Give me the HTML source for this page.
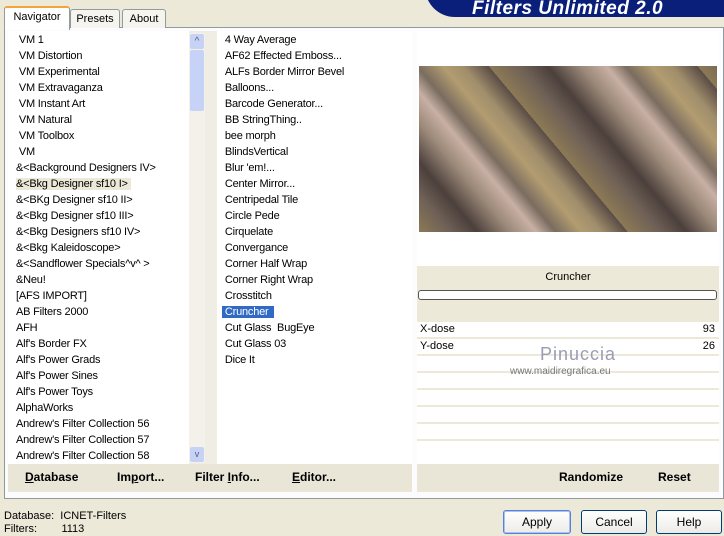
<!DOCTYPE html><html><head><style>
body{margin:0;width:724px;height:531px;background:#ECE9D8;font-family:"Liberation Sans",sans-serif;font-size:11px;position:relative;overflow:hidden;color:#000}
.a{position:absolute}
.tab{position:absolute;top:9px;height:18px;border:1px solid #919B9C;border-bottom:none;background:#F5F4EE;font-size:11px;text-align:center;line-height:18px;border-radius:3px 3px 0 0}
.list div{height:16px;line-height:16px;white-space:nowrap;letter-spacing:-0.2px}
.row{position:absolute;left:417px;width:302px;height:15px;background:#fff;line-height:15px}
.btn{position:absolute;top:510px;height:22px;border:1px solid #003C74;border-radius:3px;background:linear-gradient(#fff,#ECEBE6);text-align:center;line-height:22px;font-size:12px}
.bb{position:absolute;top:470px;font-weight:bold;font-size:12px}
</style></head><body>
<div class="a" style="left:4px;top:27px;width:718px;height:470px;border:1px solid #919B9C;background:#FCFCFE"></div>
<div class="tab" style="left:4px;top:6px;height:22px;width:64px;background:#fff;border-top:2px solid #F1A53B;z-index:2">Navigator</div>
<div class="tab" style="left:70px;width:48px">Presets</div>
<div class="tab" style="left:122px;width:42px">About</div>
<div class="a" style="left:425px;top:-20px;width:320px;height:37px;background:#0A1F7A;border-radius:0 0 0 30px"></div>
<div class="a" style="left:472px;top:-2px;color:#fff;font-weight:bold;font-style:italic;font-size:19px;letter-spacing:0.5px">Filters Unlimited 2.0</div>
<div class="a" style="left:8px;top:31px;width:181px;height:433px;background:#fff"></div>
<div class="a" style="left:189px;top:31px;width:28px;height:433px;background:#F0EEE4"></div>
<div class="a" style="left:189px;top:33px;width:16px;height:430px;background:#F3F1EA"></div>
<div class="a" style="left:190px;top:34px;width:14px;height:15px;background:#C6D3F7;border-radius:2px;color:#4D6185;font-size:10px;text-align:center;line-height:15px">^</div>
<div class="a" style="left:190px;top:50px;width:14px;height:61px;background:#C6D3F7;border-radius:2px"></div>
<div class="a" style="left:190px;top:447px;width:14px;height:15px;background:#C6D3F7;border-radius:2px;color:#4D6185;font-size:9px;text-align:center;line-height:15px">v</div>
<div class="a" style="left:217px;top:31px;width:195px;height:433px;background:#fff"></div>
<div class="a list" style="left:16px;top:32px">
<div>&nbsp;VM 1</div><div>&nbsp;VM Distortion</div><div>&nbsp;VM Experimental</div><div>&nbsp;VM Extravaganza</div><div>&nbsp;VM Instant Art</div><div>&nbsp;VM Natural</div><div>&nbsp;VM Toolbox</div><div>&nbsp;VM</div><div>&amp;&lt;Background Designers IV&gt;</div><div><span style="background:#ECE9D8;padding-right:3px">&amp;&lt;Bkg Designer sf10 I&gt;</span></div><div>&amp;&lt;BKg Designer sf10 II&gt;</div><div>&amp;&lt;Bkg Designer sf10 III&gt;</div><div>&amp;&lt;Bkg Designers sf10 IV&gt;</div><div>&amp;&lt;Bkg Kaleidoscope&gt;</div><div>&amp;&lt;Sandflower Specials^v^ &gt;</div><div>&amp;Neu!</div><div>[AFS IMPORT]</div><div>AB Filters 2000</div><div>AFH</div><div>Alf's Border FX</div><div>Alf's Power Grads</div><div>Alf's Power Sines</div><div>Alf's Power Toys</div><div>AlphaWorks</div><div>Andrew's Filter Collection 56</div><div>Andrew's Filter Collection 57</div><div>Andrew's Filter Collection 58</div></div>
<div class="a list" style="left:222px;top:32px">
<div>&nbsp;4 Way Average</div><div>&nbsp;AF62 Effected Emboss...</div><div>&nbsp;ALFs Border Mirror Bevel</div><div>&nbsp;Balloons...</div><div>&nbsp;Barcode Generator...</div><div>&nbsp;BB StringThing..</div><div>&nbsp;bee morph</div><div>&nbsp;BlindsVertical</div><div>&nbsp;Blur 'em!...</div><div>&nbsp;Center Mirror...</div><div>&nbsp;Centripedal Tile</div><div>&nbsp;Circle Pede</div><div>&nbsp;Cirquelate</div><div>&nbsp;Convergance</div><div>&nbsp;Corner Half Wrap</div><div>&nbsp;Corner Right Wrap</div><div>&nbsp;Crosstitch</div><div><span style="background:#316AC5;color:#fff;padding-right:5px">&nbsp;Cruncher</span></div><div>&nbsp;Cut Glass &nbsp;BugEye</div><div>&nbsp;Cut Glass 03</div><div>&nbsp;Dice It</div></div>
<div class="a" style="left:417px;top:31px;width:302px;height:235px;background:#fff"></div>
<div class="a" style="left:419px;top:66px;width:298px;height:166px;background:repeating-linear-gradient(50deg,#8c7a55 0px,#6e6056 25px,#4c403c 45px,#9a8878 70px,#c8b0a4 90px,#7a6c60 105px,#b29c70 125px,#a08e6c 140px,#5a4c46 160px)"></div>
<div class="a" style="left:417px;top:266px;width:302px;height:198px;background:#ECE9D8"></div>
<div class="a" style="left:417px;top:271px;width:302px;text-align:center;font-size:11px">Cruncher</div>
<div class="a" style="left:418px;top:290px;width:297px;height:8px;border:1px solid #555;border-radius:3px;background:#fff"></div>
<div class="row" style="top:322px">&nbsp;X-dose<span style="float:right;margin-right:4px">93</span></div>
<div class="row" style="top:339px">&nbsp;Y-dose<span style="float:right;margin-right:4px">26</span></div>
<div class="row" style="top:356px"></div><div class="row" style="top:373px"></div><div class="row" style="top:390px"></div><div class="row" style="top:407px"></div><div class="row" style="top:424px"></div><div class="row" style="top:441px;height:23px"></div>
<div class="a" style="left:540px;top:344px;color:#9b9bb5;font-size:18px;letter-spacing:1px">Pinuccia</div>
<div class="a" style="left:510px;top:366px;color:#777;font-size:10px">www.maidiregrafica.eu</div>
<div class="a" style="left:8px;top:464px;width:404px;height:28px;background:#E9E6D8"></div>
<div class="a" style="left:417px;top:464px;width:302px;height:28px;background:#E9E6D8"></div>
<div class="bb" style="left:25px"><u>D</u>atabase</div>
<div class="bb" style="left:117px">Im<u>p</u>ort...</div>
<div class="bb" style="left:195px">Filter <u>I</u>nfo...</div>
<div class="bb" style="left:292px"><u>E</u>ditor...</div>
<div class="bb" style="left:559px">Randomize</div>
<div class="bb" style="left:658px">Reset</div>
<div class="a" style="left:4px;top:510px;font-size:11px;line-height:13px">Database:&nbsp; ICNET-Filters<br>Filters:&nbsp;&nbsp;&nbsp;&nbsp;&nbsp;&nbsp;&nbsp; 1113</div>
<div class="btn" style="left:503px;width:66px;border-color:#5A7EDC;box-shadow:inset 0 0 0 1px #A8C3F0">Apply</div>
<div class="btn" style="left:581px;width:64px">Cancel</div>
<div class="btn" style="left:656px;width:64px">Help</div>
</body></html>
